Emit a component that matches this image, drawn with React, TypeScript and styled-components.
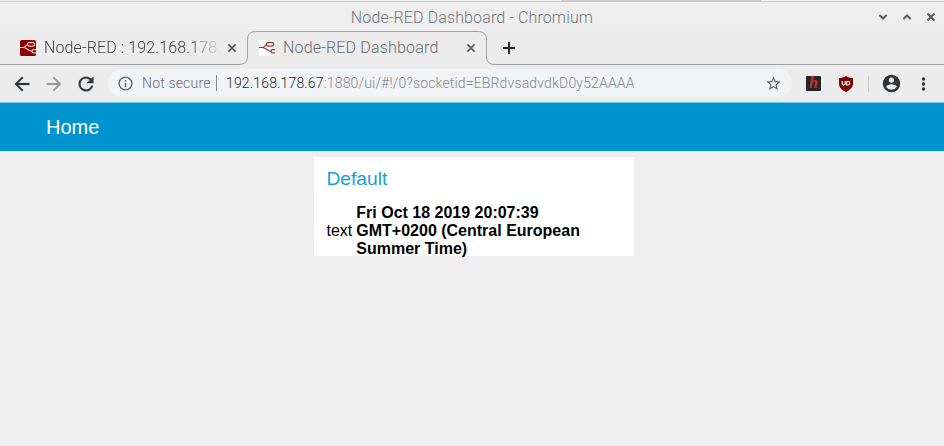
import React from "react";
import styled, { createGlobalStyle } from "styled-components";

const GlobalStyle = createGlobalStyle`
  html, body { margin: 0; padding: 0; background: #eeeeee; }
  body { overflow: hidden; }
  * { box-sizing: border-box; }
  svg { display: block; flex: none; }
`;

const Window = styled.div`
  width: 944px;
  height: 446px;
  display: flex;
  flex-direction: column;
  background: #eeeeee;
  font-family: Roboto, sans-serif;
  font-weight: 300;
  overflow: hidden;
`;

const TopEdge = styled.div`
  height: 2px;
  flex: none;
  background: linear-gradient(90deg, #e9e9e9 160px, #f4f4f4 160px 561px, #cccccc 561px 761px, #f4f4f4 761px);
  border-bottom: 1px solid #cbcbcb;
`;

const TitleBar = styled.div`
  height: 29px;
  flex: none;
  display: grid;
  grid-template-columns: 1fr auto 1fr;
  align-items: center;
  background: #eeeeee;
`;

const Title = styled.div`
  grid-column: 2;
  height: 29px;
  line-height: 31px;
  font-size: 16px;
  letter-spacing: 0.12px;
  color: #74777d;
  white-space: nowrap;
`;

const WindowButtons = styled.div`
  display: flex;
  justify-content: flex-end;
  gap: 14px;
  padding: 1px 8px 0 0;
`;

const TabStrip = styled.div`
  height: 34px;
  flex: none;
  display: flex;
  align-items: center;
  background: #ececec;
  box-shadow: inset 0 -1px #a3a3a5;
`;

const Tab = styled.div<{ $active?: boolean }>`
  position: relative;
  width: ${(p) => (p.$active ? "239px" : "247px")};
  height: 34px;
  flex: none;
  display: flex;
  align-items: center;
  padding: ${(p) => (p.$active ? "0 10px 0 12px" : "0 10px 0 20px")};
`;

const TabOutline = styled.svg`
  position: absolute;
  left: -8px;
  top: 0;
`;

const TabLabel = styled.div<{ $fade?: boolean }>`
  position: relative;
  width: 178px;
  flex: none;
  margin-left: 8px;
  margin-right: 5px;
  line-height: 24px;
  font-size: 16px;
  letter-spacing: ${(p) => (p.$fade ? "0.12px" : "0.18px")};
  white-space: nowrap;
  color: ${(p) => (p.$fade ? "#3f4347" : "#686c70")};
  mask-image: ${(p) => (p.$fade ? "linear-gradient(90deg, #000 145px, transparent 178px)" : "none")};
`;

const Favicon = styled.svg`
  position: relative;
`;

const CloseIcon = styled.svg`
  position: relative;
  margin-left: auto;
`;

const NewTab = styled.div`
  padding-left: 17px;
`;

const Toolbar = styled.div`
  height: 37px;
  flex: none;
  display: flex;
  align-items: center;
  padding-left: 11px;
  background: #ececec;
`;

const NavButtons = styled.div`
  display: flex;
  flex: none;
  gap: 10px;
  width: 97px;
`;

const AddressBar = styled.div`
  width: 684px;
  height: 28px;
  margin-top: -1px;
  flex: none;
  display: flex;
  align-items: center;
  padding: 0 10px 0 9px;
  border-radius: 14px;
  background: #f1f3f5;
  font-size: 14px;
  white-space: nowrap;
`;

const Security = styled.span`
  width: 74px;
  margin-left: 8px;
  letter-spacing: 0.18px;
  color: #6c7075;
`;

const SecurityRule = styled.span`
  width: 1px;
  height: 16px;
  background: #85898d;
`;

const Url = styled.span`
  margin-left: 9px;
  letter-spacing: 0.16px;
  color: #85898c;
`;

const Host = styled.span`
  color: #26292d;
`;

const StarIcon = styled.svg`
  margin-left: auto;
`;

const Extensions = styled.div`
  flex: 1;
  min-width: 0;
  display: flex;
  align-items: center;
  padding-left: 14px;
`;

const ExtensionBadge = styled.div`
  width: 15px;
  height: 15px;
  flex: none;
  margin: -1px 18px 0 0;
  border-radius: 1px;
  background: #252627;
  color: #c92d27;
  font: italic 700 16px/14px "Liberation Serif", serif;
  text-align: center;
`;

const ToolbarRule = styled.div`
  width: 1px;
  height: 16px;
  flex: none;
  margin: 0 12px 0 15px;
  background: #c6c8ca;
`;

const AppHeader = styled.header`
  height: 49px;
  flex: none;
  padding-left: 46px;
  border-top: 1px solid #77cbe3;
  background: #0094ce;
  color: #ffffff;
  font: 400 20px/48px "Liberation Sans", Arial, sans-serif;
`;

const Dashboard = styled.main`
  flex: 1;
  padding: 6px 0 0 314px;
  background: #eeeeee;
  font-family: "Liberation Sans", Arial, sans-serif;
  font-weight: 400;
`;

const Card = styled.section`
  width: 320px;
  height: 99px;
  padding: 10px 12.5px 0;
  background: #ffffff;
`;

const CardTitle = styled.h2`
  margin: 0;
  height: 37px;
  font-size: 19.2px;
  line-height: 24px;
  font-weight: 400;
  color: #189fd1;
`;

const Field = styled.div`
  display: flex;
  align-items: center;
  gap: 4px;
  font-size: 16px;
  line-height: 18px;
  color: #000000;
`;

const FieldValue = styled.strong`
  width: 240px;
  font-weight: 700;
`;

function NodeRedIcon({ color, background }: { color: string; background: string }) {
  return (
    <Favicon width="16" height="16" viewBox="0 0 16 16">
      <rect width="16" height="16" rx="1.5" fill={background} />
      <g fill="none" stroke={color} strokeWidth="1.2">
        <path d="M0 7.5h3.5C6 7.500 5.500 4.500 8 4.500M3.500 7.500c3.500 0 4.500 3.800 8.500 3.800" />
        <rect x="7.600" y="2.600" width="7" height="3.600" rx="1.400" />
        <path d="M16 9.600h-2.500c-1.900 0-1.900 3.200 0 3.200H16" />
      </g>
    </Favicon>
  );
}

function CloseTab() {
  return (
    <CloseIcon width="10" height="10" viewBox="0 0 10 10">
      <path d="m1.4 1.4 7.2 7.2m0-7.2-7.2 7.2" stroke="#585b5f" strokeWidth="1.7" />
    </CloseIcon>
  );
}

export default function App() {
  return (
    <>
      <GlobalStyle />
      <Window>
        <TopEdge />
        <TitleBar>
          <Title>Node-RED Dashboard - Chromium</Title>
          <WindowButtons>
            <svg width="10" height="10" viewBox="0 0 10 10">
              <path d="m1.4 3 3.6 3.5L8.6 3" fill="none" stroke="#5c5c5c" strokeWidth="2" />
            </svg>
            <svg width="10" height="10" viewBox="0 0 10 10">
              <path d="M1.4 7 5 3.5 8.6 7" fill="none" stroke="#5c5c5c" strokeWidth="2" />
            </svg>
            <svg width="10" height="10" viewBox="0 0 10 10">
              <path d="m1.5 1.5 7 7m0-7-7 7" stroke="#5c5c5c" strokeWidth="2.2" />
            </svg>
          </WindowButtons>
        </TitleBar>
        <TabStrip>
          <Tab>
            <NodeRedIcon color="#eccaca" background="#8f0000" />
            <TabLabel $fade>Node-RED : 192.168.178.</TabLabel>
            <CloseTab />
          </Tab>
          <Tab $active>
            <TabOutline width="256" height="34" viewBox="0 0 256 34">
              <path
                d="M0 33.5q8.5 0 8.5-8V8.5q0-8 8-8h223q8 0 8 8v17q0 8 8.5 8V34H0Z"
                fill="#ececec"
              />
              <path
                d="M0 33.5q8.5 0 8.5-8V8.5q0-8 8-8h223q8 0 8 8v17q0 8 8.5 8"
                fill="none"
                stroke="#a3a3a5"
              />
            </TabOutline>
            <NodeRedIcon color="#9c3333" background="#fafafa" />
            <TabLabel>Node-RED Dashboard</TabLabel>
            <CloseTab />
          </Tab>
          <NewTab>
            <svg width="12" height="12" viewBox="0 0 12 12">
              <path d="M0 6h12M6 0v12" stroke="#26292c" strokeWidth="2" />
            </svg>
          </NewTab>
        </TabStrip>
        <Toolbar>
          <NavButtons>
            <svg width="22" height="22" viewBox="0 0 24 24" fill="#303437" stroke="#303437" strokeWidth=".3">
              <path d="M20 11H7.83l5.59-5.59L12 4l-8 8 8 8 1.41-1.41L7.83 13H20v-2z" />
            </svg>
            <svg width="22" height="22" viewBox="0 0 24 24" fill="#96999b">
              <path d="m12 4-1.41 1.41L16.17 11H4v2h12.17l-5.58 5.59L12 20l8-8z" />
            </svg>
            <svg width="22" height="22" viewBox="0 0 24 24" fill="#303437" stroke="#303437" strokeWidth=".4">
              <path d="M17.65 6.35A7.96 7.96 0 0 0 12 4a8 8 0 1 0 7.73 10h-2.08A6 6 0 1 1 12 6c1.66 0 3.14.69 4.22 1.78L13 11h7V4l-2.35 2.35z" />
            </svg>
          </NavButtons>
          <AddressBar>
            <svg width="17" height="17" viewBox="0 0 24 24" fill="#5f6367">
              <path d="M11 7h2v2h-2zm0 4h2v6h-2zm1-9a10 10 0 1 0 0 20 10 10 0 0 0 0-20zm0 18a8 8 0 1 1 0-16 8 8 0 0 1 0 16z" />
            </svg>
            <Security>Not secure</Security>
            <SecurityRule />
            <Url>
              <Host>192.168.178.67</Host>:1880/ui/#!/0?socketid=EBRdvsadvdkD0y52AAAA
            </Url>
            <StarIcon width="17" height="17" viewBox="0 0 24 24" fill="#5f6367">
              <path d="m22 9.24-7.19-.62L12 2 9.19 8.63 2 9.24l5.46 4.73L5.82 21 12 17.27 18.18 21l-1.63-7.03L22 9.24zM12 15.4l-3.76 2.27 1-4.28-3.32-2.88 4.38-.38L12 6.1l1.71 4.04 4.38.38-3.32 2.88 1 4.28L12 15.4z" />
            </StarIcon>
          </AddressBar>
          <Extensions>
            <ExtensionBadge>h</ExtensionBadge>
            <svg width="14" height="16" viewBox="0 0 14 16">
              <path d="M7 0c2 1.5 4 2 7 2v5.5c0 4-3 6.5-7 8.5-4-2-7-4.5-7-8.5V2c3 0 5-.5 7-2z" fill="#800000" />
              <path d="M3.2 5v2.5c0 2 3 2 3 0V5" fill="none" stroke="#fff" strokeWidth="1.1" />
              <path d="M7.7 5.5h1c2.700 0 2.700 3.500 0 3.500h-1z" fill="none" stroke="#fff" strokeWidth="1.1" />
            </svg>
            <ToolbarRule />
            <svg width="21" height="21" viewBox="0 0 24 24" fill="#303437">
              <path d="M12 2a10 10 0 1 0 0 20 10 10 0 0 0 0-20zm0 3a3 3 0 1 1 0 6 3 3 0 0 1 0-6zm0 14.2a7.2 7.2 0 0 1-6-3.22c.03-1.99 4-3.08 6-3.08s5.97 1.09 6 3.08a7.2 7.2 0 0 1-6 3.22z" />
            </svg>
            <svg width="42" height="16" viewBox="0 0 42 16" fill="#303437">
              <circle cx="21.5" cy="3" r="1.75" />
              <circle cx="21.5" cy="8" r="1.75" />
              <circle cx="21.5" cy="13" r="1.75" />
            </svg>
          </Extensions>
        </Toolbar>
        <AppHeader>Home</AppHeader>
        <Dashboard>
          <Card>
            <CardTitle>Default</CardTitle>
            <Field>
              <span>text</span>
              <FieldValue>Fri Oct 18 2019 20:07:39 GMT+0200 (Central European Summer Time)</FieldValue>
            </Field>
          </Card>
        </Dashboard>
      </Window>
    </>
  );
}
